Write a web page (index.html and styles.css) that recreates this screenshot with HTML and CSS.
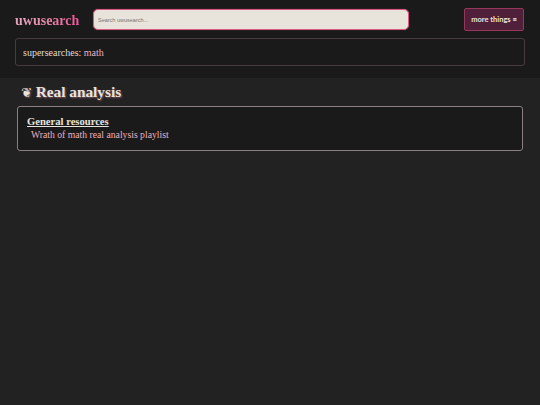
FILE: index.html
```html
<!DOCTYPE html>
<html lang="en">
<head>
<meta charset="utf-8">
<title>uwusearch</title>
<link rel="stylesheet" href="styles.css">
</head>
<body>
<header class="top">
  <div class="bar">
    <a class="logo" href="#">uwusearch</a>
    <input class="search" type="text" placeholder="Search uwusearch...">
    <button class="more" type="button">more things ≡</button>
  </div>
  <div class="super"><span>supersearches: <a href="#">math</a></span></div>
</header>
<main class="content">
  <h1 class="title"><span class="heart">❦</span> Real analysis</h1>
  <section class="card">
    <h2 class="card-title">General resources</h2>
    <a class="card-link" href="#">Wrath of math real analysis playlist</a>
  </section>
</main>
</body>
</html>
```
FILE: styles.css
```css
* { box-sizing: border-box; }
html, body { margin: 0; height: 100%; }
body {
  background: #222222;
  color: #e8e4dc;
  font-family: "Liberation Serif", serif;
  overflow: hidden;
}
a { text-decoration: none; }
.top {
  background: #1a1a1a;
  height: 78px;
  padding: 8px 15px 0;
}
.bar {
  display: flex;
  align-items: center;
  height: 23px;
}
.logo {
  font-size: 14px;
  line-height: 16px;
  font-weight: 700;
  width: 78px;
  margin-top: 3px;
  flex: none;
  background: linear-gradient(90deg, #e4a4bc 0%, #e88aa8 40%, #f0509a 85%);
  -webkit-background-clip: text;
  background-clip: text;
  color: transparent;
}
.search {
  width: 316px;
  height: 21px;
  flex: none;
  background: #e8e4dc;
  border: 1px solid #d85a80;
  border-radius: 5px;
  box-shadow: 0 0 1px #c04468;
  padding: 0 4px;
  font-family: "Liberation Sans", sans-serif;
  font-size: 5.5px;
  outline: none;
}
.search::placeholder { color: #777; }
.more {
  margin-left: 55px;
  width: 60px;
  height: 23px;
  flex: none;
  background: #50203a;
  border: 1px solid #95375a;
  border-radius: 2px;
  color: #e8e4dc;
  font-family: Lato, sans-serif;
  font-size: 7.5px;
  font-weight: 700;
  padding: 0;
}
.super {
  margin-top: 7px;
  height: 28px;
  width: 510px;
  border: 1px solid #4a3a40;
  border-radius: 3px;
  padding: 0 7px;
  display: flex;
  align-items: center;
  font-size: 10px;
  color: #e0dcd4;
}
.super a { color: #eab0c0; }
.content { padding: 5px 17px 0; }
.title {
  margin: 0 0 5px 4px;
  height: 18px;
  font-size: 15.3px;
  line-height: 18px;
  font-weight: 700;
  color: #e8e4dc;
  text-shadow: 1px 1px 2px #8a5a6a;
}
.heart { font-family: "DejaVu Sans", sans-serif; font-size: 13px; }
.card {
  width: 506px;
  height: 45px;
  background: #1a1a1a;
  border: 1px solid #8a8084;
  border-radius: 3px;
  padding: 9px;
}
.card-title {
  margin: 0;
  font-size: 10.6px;
  line-height: 12px;
  font-weight: 700;
  color: #e8e4dc;
  text-decoration: underline;
}
.card-link {
  display: block;
  margin-left: 4px;
  font-size: 9.7px;
  line-height: 13px;
  color: #eab0c0;
}
```
